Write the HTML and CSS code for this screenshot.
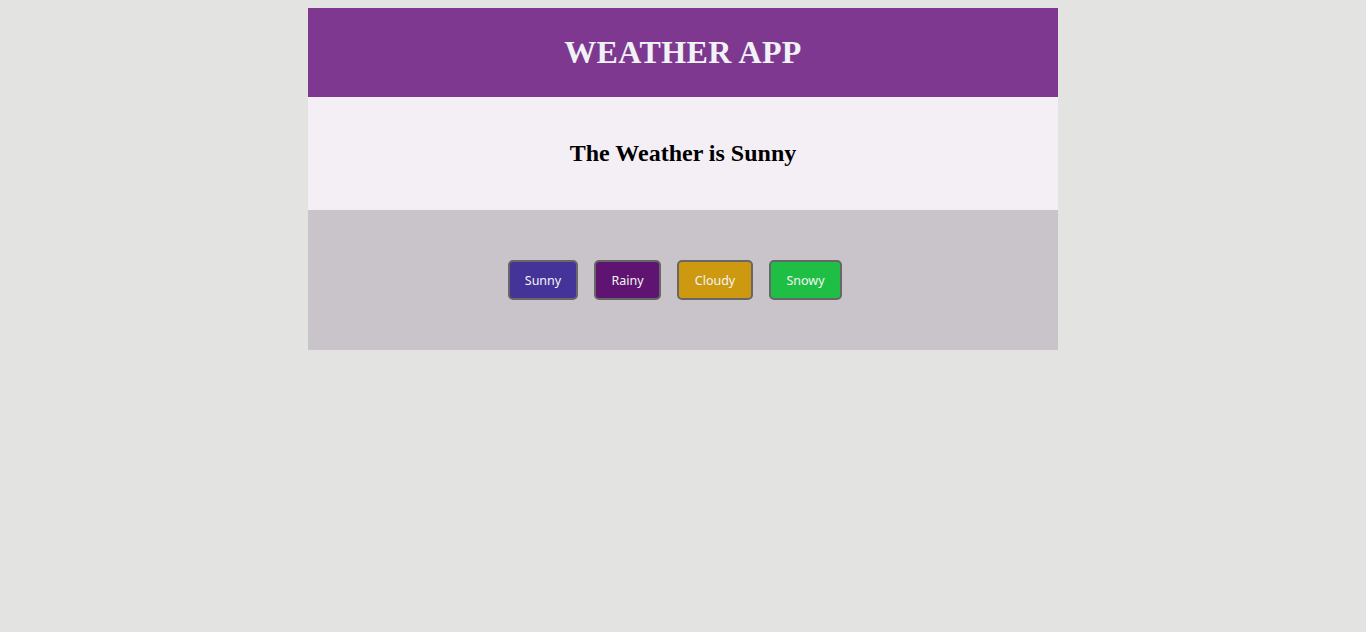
FILE: index.html
```html
<!DOCTYPE html>
<html>
<head>
<meta charset="utf-8">
<title>Weather App</title>
<link rel="stylesheet" href="styles.css">
</head>
<body>
<div class="app">
  <header class="app-header">
    <h1 class="app-title">WEATHER APP</h1>
  </header>
  <section class="status">
    <h2 class="status-text">The Weather is Sunny</h2>
  </section>
  <section class="controls">
    <button class="btn btn-sunny">Sunny</button>
    <button class="btn btn-rainy">Rainy</button>
    <button class="btn btn-cloudy">Cloudy</button>
    <button class="btn btn-snowy">Snowy</button>
  </section>
</div>
</body>
</html>
```
FILE: styles.css
```css
html, body {
  margin: 0;
  padding: 0;
}
body {
  background: #e3e3e1;
  padding-top: 8px;
  font-family: "Liberation Serif", "Times New Roman", serif;
}
.app {
  width: 750px;
  margin: 0 auto;
}
.app-header {
  background: #7e3890;
  padding: 26px 0;
  text-align: center;
}
.app-title {
  margin: 0;
  font-size: 32px;
  line-height: 37px;
  letter-spacing: 0.4px;
  font-weight: bold;
  color: #f0f2f6;
}
.status {
  background: #f4eff5;
  padding: 42px 0 43px;
  text-align: center;
}
.status-text {
  margin: 0;
  font-size: 24px;
  line-height: 28px;
  font-weight: bold;
  color: #000;
}
.controls {
  background: #c9c4c9;
  padding: 50px 16px 50px 0;
  display: flex;
  justify-content: center;
  gap: 16px;
}
.btn {
  box-sizing: border-box;
  height: 40px;
  padding: 0;
  text-align: center;
  border: 2px solid #676767;
  border-radius: 5px;
  color: #f4f4f4;
  font-family: "Noto Sans", "Open Sans", sans-serif;
  font-size: 12.5px;
  cursor: pointer;
}
.btn-sunny { background: #443399; width: 70px; }
.btn-rainy { background: #5e1470; width: 67px; }
.btn-cloudy { background: #cc9910; width: 76px; }
.btn-snowy { background: #1ebf44; width: 73px; }
```
